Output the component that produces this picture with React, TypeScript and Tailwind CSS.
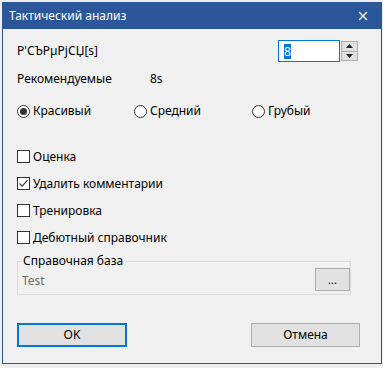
import { useState } from "react";

const font = { fontFamily: '"Noto Sans", "Open Sans", sans-serif' };

function Radio({ label, checked }: { label: string; checked?: boolean }) {
  return (
    <div className="flex items-center gap-[3px]">
      <span className="w-[13px] h-[13px] rounded-full border border-[#333] bg-white flex items-center justify-center">
        {checked && <span className="w-[7px] h-[7px] rounded-full bg-[#333]" />}
      </span>
      <span>{label}</span>
    </div>
  );
}

function Check({ label, checked }: { label: string; checked?: boolean }) {
  return (
    <div className="h-[27px] flex items-center gap-[3px]">
      <span className="w-[13px] h-[13px] border border-[#333] bg-white flex items-center justify-center">
        {checked && (
          <svg width="11" height="11" viewBox="0 0 11 11">
            <path d="M1.5 5.5 L4.2 8.2 L9.5 2.2" fill="none" stroke="#333" strokeWidth="1.1" />
          </svg>
        )}
      </span>
      <span>{label}</span>
    </div>
  );
}

export default function App() {
  const [value] = useState("8");

  return (
    <div className="w-[383px] h-[368px] bg-[#eceef0] pt-[2px] pl-[2px] text-[12px] text-black" style={font}>
      <div className="w-[380px] h-[362px] bg-[#f0f0f0] border-x border-b border-[#2b579a] flex flex-col">
        {/* Title bar */}
        <div className="h-[27px] bg-[#2b579a] flex items-center justify-between pl-[6px] pr-[13px] text-white">
          <span>Тактический анализ</span>
          <svg width="10" height="10" viewBox="0 0 10 10">
            <path d="M1 1 L9 9 M9 1 L1 9" stroke="white" strokeWidth="1.4" />
          </svg>
        </div>

        <div className="flex flex-col pl-[14px] pr-[23px]">
          {/* Time row */}
          <div className="mt-[11px] h-[22px] flex items-center justify-between">
            <span>Р'СЪРµРјСЏ[s]</span>
            <div className="flex items-center gap-[1px]">
              <div className="w-[62px] h-[22px] border border-[#0078d7] bg-white flex items-center pl-[5px]">
                <span className="bg-[#0078d7] text-white leading-[15px]">{value}</span>
              </div>
              <div className="w-[17px] h-[20px] border border-[#adadad] flex flex-col">
                <div className="flex-1 bg-[#e1e1e1] border-b border-[#adadad] flex items-center justify-center">
                  <svg width="7" height="4" viewBox="0 0 7 4"><path d="M0 4 L3.5 0 L7 4 Z" fill="#222" /></svg>
                </div>
                <div className="flex-1 bg-[#e1e1e1] flex items-center justify-center">
                  <svg width="7" height="4" viewBox="0 0 7 4"><path d="M0 0 L3.5 4 L7 0 Z" fill="#222" /></svg>
                </div>
              </div>
            </div>
          </div>

          {/* Recommended */}
          <div className="mt-[9px] h-[16px] flex items-center">
            <span className="w-[133px]">Рекомендуемые</span>
            <span>8s</span>
          </div>

          {/* Radios */}
          <div className="mt-[16px] h-[16px] flex items-center">
            <div className="w-[117px]"><Radio label="Красивый" checked /></div>
            <div className="w-[118px]"><Radio label="Средний" /></div>
            <Radio label="Грубый" />
          </div>

          {/* Checkboxes */}
          <div className="mt-[24px] flex flex-col">
            <Check label="Оценка" />
            <Check label="Удалить комментарии" checked />
            <Check label="Тренировка" />
            <Check label="Дебютный справочник" />
          </div>

          {/* Group box */}
          <div className="relative mt-[10px] w-[334px] h-[34px] border border-[#dcdcdc] pl-[4px] flex items-end justify-between">
            <span className="absolute left-[4px] top-[-9px] bg-[#f0f0f0] px-[1px] leading-[16px]">Справочная база</span>
            <span className="text-[#6d6d6d] mb-[5px] leading-[16px]">Test</span>
            <button className="w-[35px] h-[23px] mb-[3px] bg-[#e1e1e1] border border-[#adadad] text-[11px] leading-none">...</button>
          </div>

          {/* Buttons */}
          <div className="mt-[28px] flex justify-between">
            <button className="w-[110px] h-[24px] bg-[#e1e1e1] border-2 border-[#0078d7]">OK</button>
            <button className="w-[109px] h-[24px] bg-[#e1e1e1] border border-[#adadad] mr-[-2px]">Отмена</button>
          </div>
        </div>
      </div>
    </div>
  );
}
